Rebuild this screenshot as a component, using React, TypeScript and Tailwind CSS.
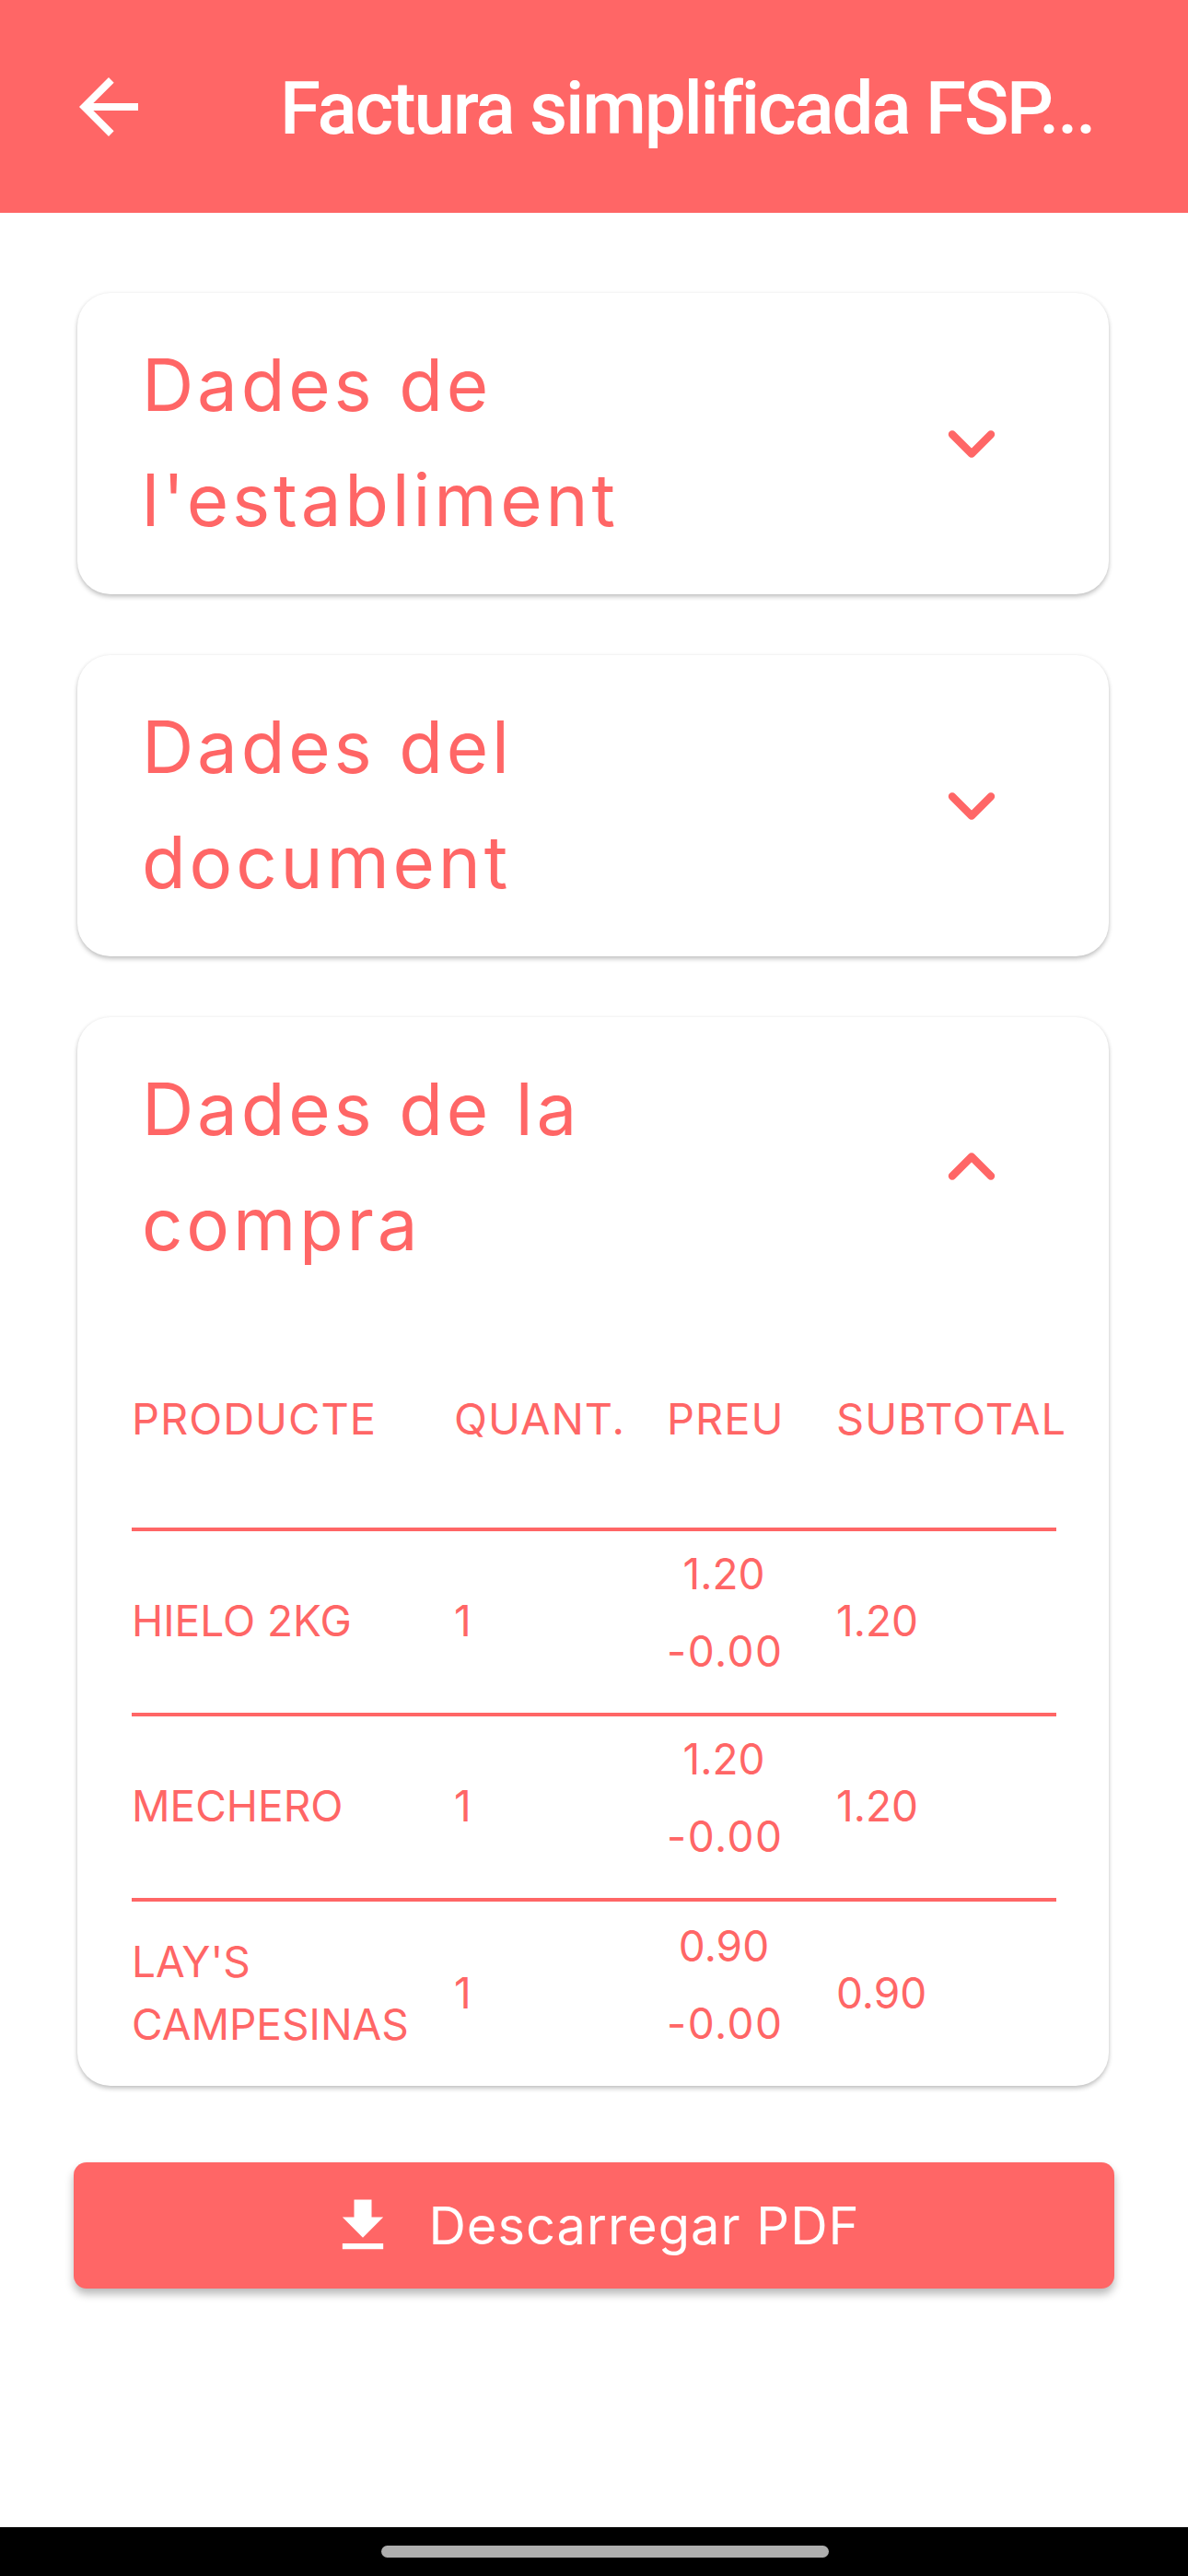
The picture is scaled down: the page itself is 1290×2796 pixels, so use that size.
import { ChevronDown, ChevronUp } from "lucide-react";

const rows = [
	{ name: ["HIELO 2KG"], qty: "1", price: "1.20", sub: "1.20" },
	{ name: ["MECHERO"], qty: "1", price: "1.20", sub: "1.20" },
	{ name: ["LAY'S", "CAMPESINAS"], qty: "1", price: "0.90", sub: "0.90" },
];

function SectionHead({ lines, open }: { lines: string[]; open?: boolean }) {
	const Icon = open ? ChevronUp : ChevronDown;
	return (
		<div className="flex items-center justify-between pl-[70px] pr-[107px] pt-[37px] pb-[40px]">
			<div className="font-['Inter',sans-serif] text-[78px] leading-[125px] tracking-[3.8px] text-[#ff6666]">
				{lines.map((l) => (
					<div key={l}>{l}</div>
				))}
			</div>
			<Icon className={`w-[84px] h-[84px] text-[#ff6666] ${open ? "" : "mt-[3px]"}`} strokeWidth={2.4} />
		</div>
	);
}

export default function App() {
	return (
		<div className="w-[1290px] h-[2796px] flex flex-col bg-white font-['Roboto',sans-serif] overflow-hidden">
			<header className="h-[231px] shrink-0 bg-[#ff6666] flex items-center text-white">
				<svg viewBox="0 0 24 24" className="w-[96px] h-[96px] ml-[70px] mr-[138px]" fill="white">
					<path d="M20 11H7.83l5.59-5.59L12 4l-8 8 8 8 1.41-1.41L7.83 13H20v-2z" />
				</svg>
				<h1 className="text-[80px] font-medium tracking-[-2.2px] whitespace-nowrap pt-[5px]">Factura simplificada FSP...</h1>
			</header>

			<main className="flex-1 flex flex-col pt-[87px] pl-[84px] pr-[86px]">
				<section className="bg-white rounded-[36px] shadow-[0_3px_5px_rgba(0,0,0,0.22),0_0_4px_rgba(0,0,0,0.06)] mb-[66px]">
					<SectionHead lines={["Dades de", "l'establiment"]} />
				</section>
				<section className="bg-white rounded-[36px] shadow-[0_3px_5px_rgba(0,0,0,0.22),0_0_4px_rgba(0,0,0,0.06)] mb-[66px]">
					<SectionHead lines={["Dades del", "document"]} />
				</section>
				<section className="bg-white rounded-[36px] shadow-[0_3px_5px_rgba(0,0,0,0.22),0_0_4px_rgba(0,0,0,0.06)] mb-[83px] h-[1160px]">
					<SectionHead lines={["Dades de la", "compra"]} open />
					<div className="ml-[59px] mr-[57px] font-['Inter',sans-serif] text-[#ff6666] text-[46px] leading-[84px] whitespace-nowrap">
						<div className="grid grid-cols-[350px_231px_184px_1fr] h-[231px] pt-[67px] text-[47px] tracking-[1px] border-b-[4px] border-[#ff6666]">
							<div>PRODUCTE</div>
							<div>QUANT.</div>
							<div>PREU</div>
							<div>SUBTOTAL</div>
						</div>
						{rows.map((r, i) => (
							<div
								key={r.name[0]}
								className={`grid grid-cols-[350px_231px_184px_1fr] items-center h-[201px] pb-[4px] ${i < 2 ? "border-b-[4px] border-[#ff6666]" : ""}`}
							>
								<div className="leading-[68px]">
									{r.name.map((n) => (
										<div key={n}>{n}</div>
									))}
								</div>
								<div>{r.qty}</div>
								<div className="w-[124px] text-center pb-[18px]">
									<div>{r.price}</div>
									<div className="tracking-[1.5px]">-0.00</div>
								</div>
								<div>{r.sub}</div>
							</div>
						))}
					</div>
				</section>
				<button className="-ml-[4px] -mr-[6px] h-[137px] shrink-0 rounded-[14px] bg-[#ff6666] shadow-[0_6px_10px_rgba(0,0,0,0.28)] flex items-center justify-center font-['Inter',sans-serif] text-white text-[56px] tracking-[1px]">
					<svg viewBox="0 0 24 24" className="w-[76px] h-[76px] mr-[33px]" fill="white">
						<path d="M19 9h-4V3H9v6H5l7 7 7-7zM5 18v2h14v-2H5z" />
					</svg>
					Descarregar PDF
				</button>
			</main>

			<footer className="h-[53px] shrink-0 bg-black flex items-center justify-center">
				<div className="w-[486px] h-[13px] ml-[24px] rounded-full bg-[#aeaeae]" />
			</footer>
		</div>
	);
}
